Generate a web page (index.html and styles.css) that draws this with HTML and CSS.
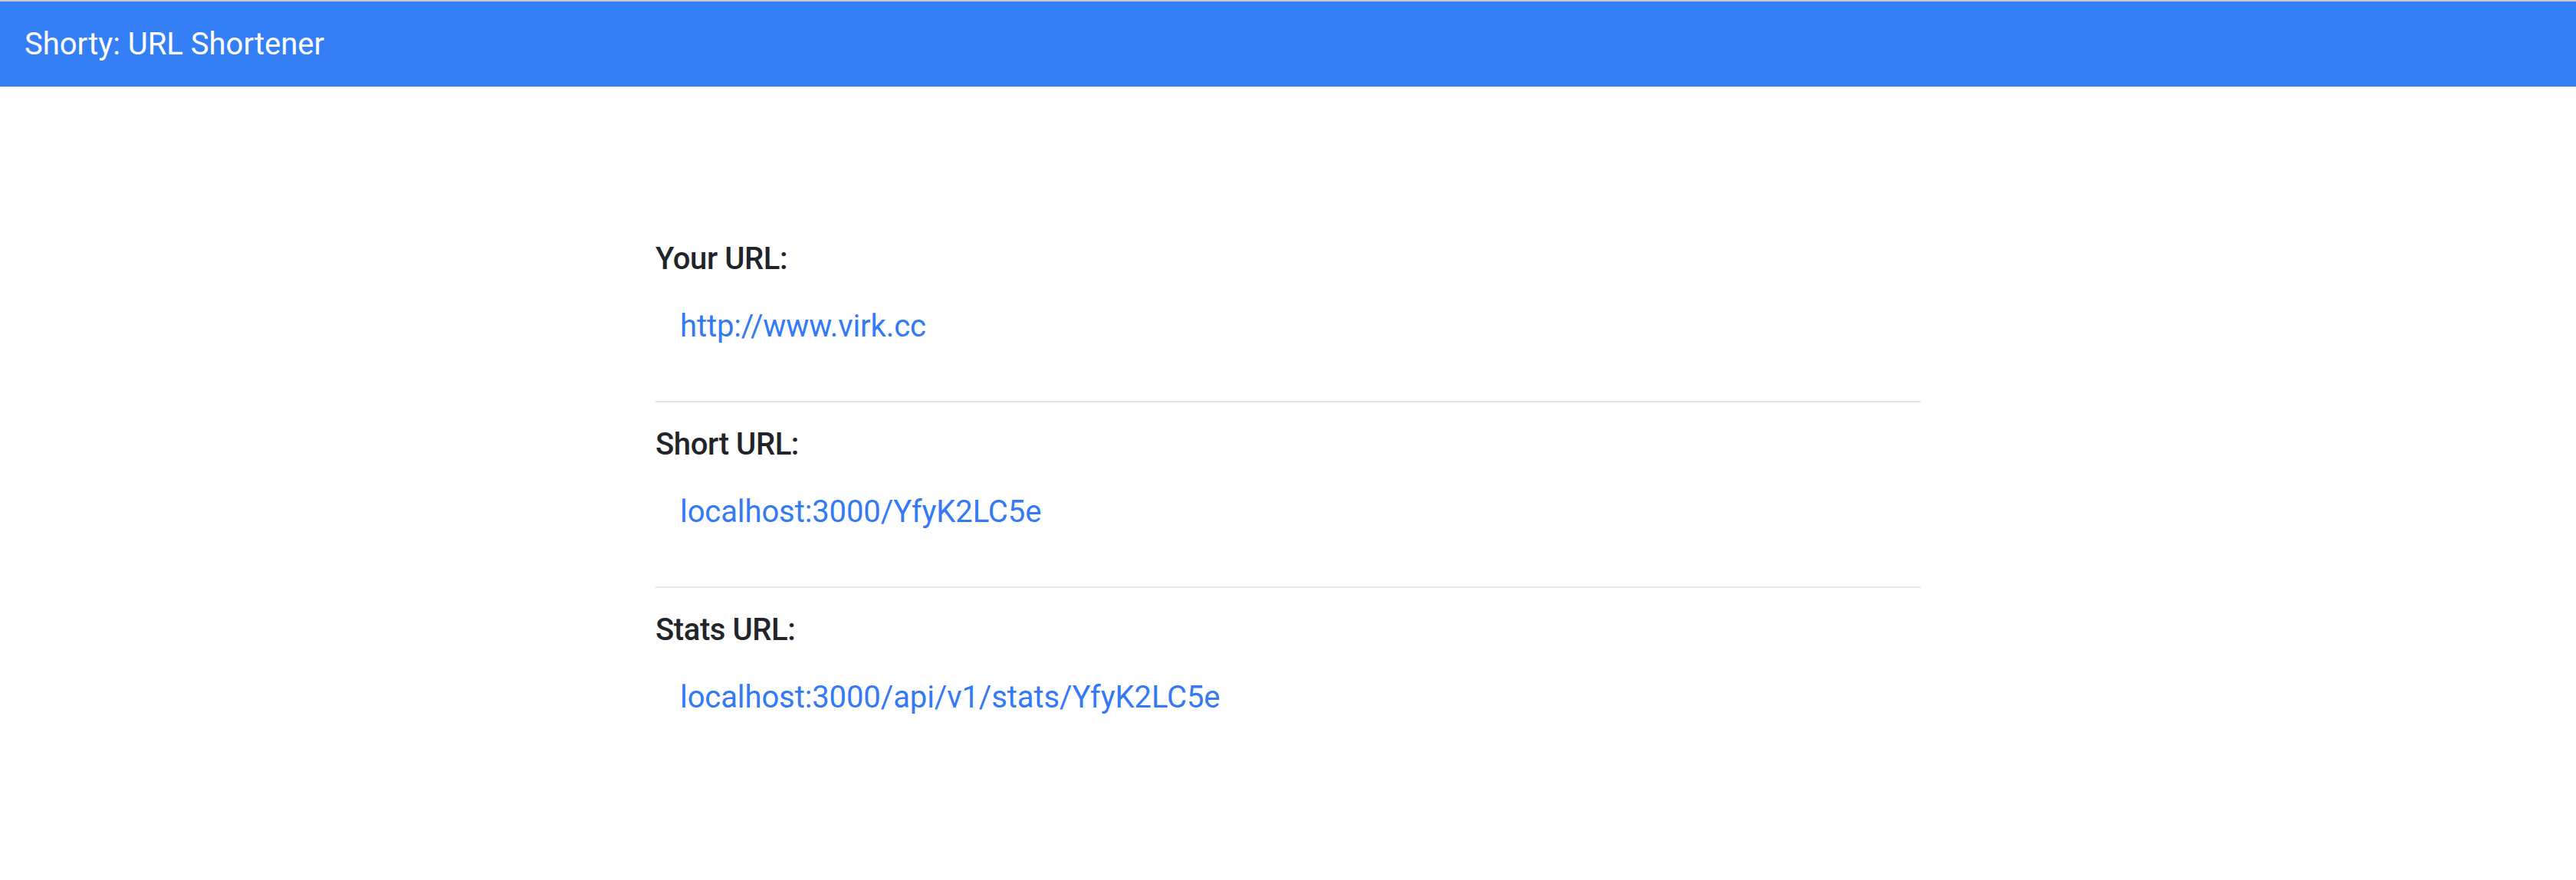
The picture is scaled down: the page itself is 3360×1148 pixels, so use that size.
FILE: index.html
```html
<!DOCTYPE html>
<html lang="en">
<head>
<meta charset="utf-8">
<title>Shorty: URL Shortener</title>
<link rel="stylesheet" href="styles.css">
</head>
<body>
<header class="navbar">
  <span class="brand">Shorty: URL Shortener</span>
</header>
<main class="content">
  <section class="entry">
    <h5 class="label">Your URL:</h5>
    <a class="link" href="#">http://www.virk.cc</a>
  </section>
  <hr class="divider">
  <section class="entry">
    <h5 class="label">Short URL:</h5>
    <a class="link" href="#">localhost:3000/YfyK2LC5e</a>
  </section>
  <hr class="divider">
  <section class="entry">
    <h5 class="label">Stats URL:</h5>
    <a class="link" href="#">localhost:3000/api/v1/stats/YfyK2LC5e</a>
  </section>
</main>
</body>
</html>
```
FILE: styles.css
```css
html, body {
  margin: 0;
  padding: 0;
  background: #ffffff;
}
body {
  font-family: Roboto, "Liberation Sans", Arial, sans-serif;
  color: #212529;
  border-top: 2px solid #c9c9c9;
}
.navbar {
  height: 111px;
  background: #357ff6;
  display: flex;
  align-items: center;
  padding: 0 32px;
  box-sizing: border-box;
}
.brand {
  color: #ffffff;
  font-size: 40px;
  line-height: 48px;
  font-weight: 400;
}
.content {
  width: 1650px;
  margin: 0 auto;
  padding-top: 201px;
  display: flex;
  flex-direction: column;
}
.entry {
  display: flex;
  flex-direction: column;
  align-items: flex-start;
}
.label {
  margin: 0 0 40px 0;
  font-size: 40px;
  line-height: 48px;
  font-weight: 500;
  letter-spacing: -0.4px;
  color: #212529;
}
.link {
  margin-left: 32px;
  font-size: 40px;
  line-height: 48px;
  color: #3479f6;
  text-decoration: none;
  letter-spacing: -0.1px;
}
.divider {
  margin: 73px 0 31px 0;
  border: 0;
  border-top: 2px solid #e6e6e6;
  height: 0;
}
```
